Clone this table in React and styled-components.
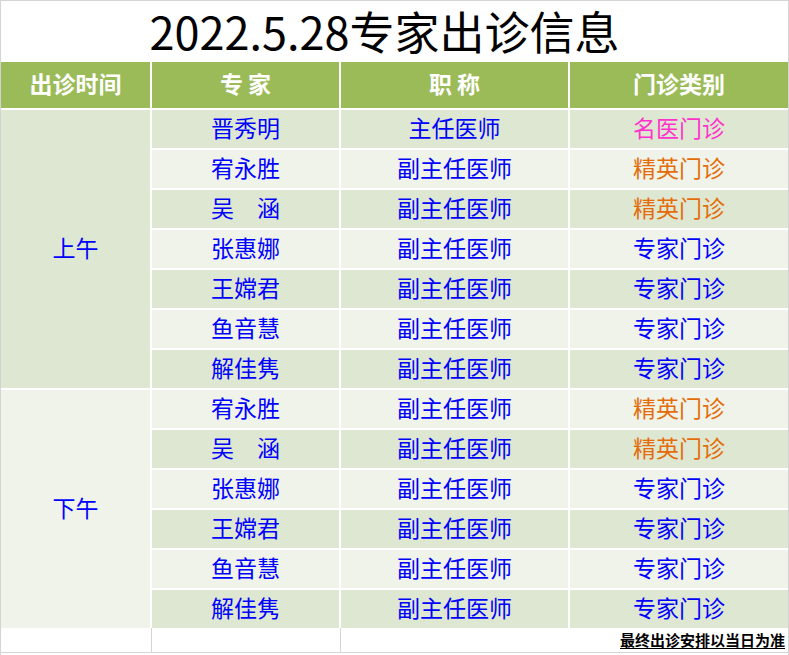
import React from "react";
import styled, { createGlobalStyle } from "styled-components";

const GlobalStyle = createGlobalStyle`
  html, body {
    margin: 0;
    padding: 0;
    background: #ffffff;
  }
  body {
    font-family: "Noto Sans CJK SC", "Noto Sans", sans-serif;
  }
`;

const Sheet = styled.div`
  width: 787px;
  height: 654px;
  border: 1px solid #d4d4d4;
  border-bottom: none;
  display: grid;
  grid-template-columns: 149px 187px 227px 218px;
  grid-template-rows: 59px 46px repeat(13, 38px) 23px;
  gap: 2px;
  background: #ffffff;
`;

const Title = styled.div`
  grid-column: 1 / span 4;
  display: flex;
  align-items: center;
  justify-content: center;
  padding-right: 20px;
  font-size: 45px;
  color: #000000;
  line-height: 1.2;
`;

const HeadCell = styled.div`
  background: #9bbb59;
  color: #ffffff;
  font-weight: bold;
  font-size: 23px;
  display: flex;
  align-items: center;
  justify-content: center;
  padding-bottom: 2px;
  white-space: pre;
  line-height: 1.2;
`;

const Cell = styled.div`
  background: ${(p) => (p.$dark ? "#dee7d1" : "#eff3e9")};
  color: ${(p) => p.$color || "#0000ff"};
  font-size: 23px;
  display: flex;
  align-items: center;
  justify-content: center;
  padding-bottom: 3px;
  white-space: pre;
  line-height: 1.2;
`;

const PeriodCell = styled(Cell)`
  grid-column: 1;
  grid-row: ${(p) => p.$rows};
`;

const FootCell = styled.div`
  border-bottom: 1px solid #d4d4d4;
  border-left: ${(p) => (p.$lined ? "1px solid #d4d4d4" : "none")};
  border-right: ${(p) => (p.$lined ? "1px solid #d4d4d4" : "none")};
  margin: -2px -2px 0 -1px;
`;

const Note = styled.div`
  grid-column: 3 / span 2;
  border-bottom: 1px solid #d4d4d4;
  margin-top: -2px;
  display: flex;
  align-items: center;
  justify-content: flex-end;
  padding-right: 3px;
  font-size: 15px;
  font-weight: bold;
  color: #000000;
  text-decoration: underline;
  text-underline-offset: 2px;
  line-height: 1.2;
`;

const PINK = "#ff33cc";
const ORANGE = "#e46c0a";

const rows = [
  ["晋秀明", "主任医师", "名医门诊", PINK],
  ["宥永胜", "副主任医师", "精英门诊", ORANGE],
  ["吴　涵", "副主任医师", "精英门诊", ORANGE],
  ["张惠娜", "副主任医师", "专家门诊"],
  ["王嫦君", "副主任医师", "专家门诊"],
  ["鱼音慧", "副主任医师", "专家门诊"],
  ["解佳隽", "副主任医师", "专家门诊"],
  ["宥永胜", "副主任医师", "精英门诊", ORANGE],
  ["吴　涵", "副主任医师", "精英门诊", ORANGE],
  ["张惠娜", "副主任医师", "专家门诊"],
  ["王嫦君", "副主任医师", "专家门诊"],
  ["鱼音慧", "副主任医师", "专家门诊"],
  ["解佳隽", "副主任医师", "专家门诊"],
];

export default function App() {
  return (
    <>
      <GlobalStyle />
      <Sheet>
        <Title>2022.5.28专家出诊信息</Title>
        <HeadCell>出诊时间</HeadCell>
        <HeadCell>专 家</HeadCell>
        <HeadCell>职 称</HeadCell>
        <HeadCell>门诊类别</HeadCell>
        <PeriodCell $dark $rows="3 / span 7">上午</PeriodCell>
        <PeriodCell $rows="10 / span 6">下午</PeriodCell>
        {rows.map(([name, title, kind, color], i) => {
          const dark = i % 2 === 0;
          return (
            <React.Fragment key={i}>
              <Cell $dark={dark} style={{ gridColumn: 2, gridRow: i + 3 }}>
                {name}
              </Cell>
              <Cell $dark={dark} style={{ gridColumn: 3, gridRow: i + 3 }}>
                {title}
              </Cell>
              <Cell
                $dark={dark}
                $color={color}
                style={{ gridColumn: 4, gridRow: i + 3 }}
              >
                {kind}
              </Cell>
            </React.Fragment>
          );
        })}
        <FootCell />
        <FootCell $lined />
        <Note>最终出诊安排以当日为准</Note>
      </Sheet>
    </>
  );
}
